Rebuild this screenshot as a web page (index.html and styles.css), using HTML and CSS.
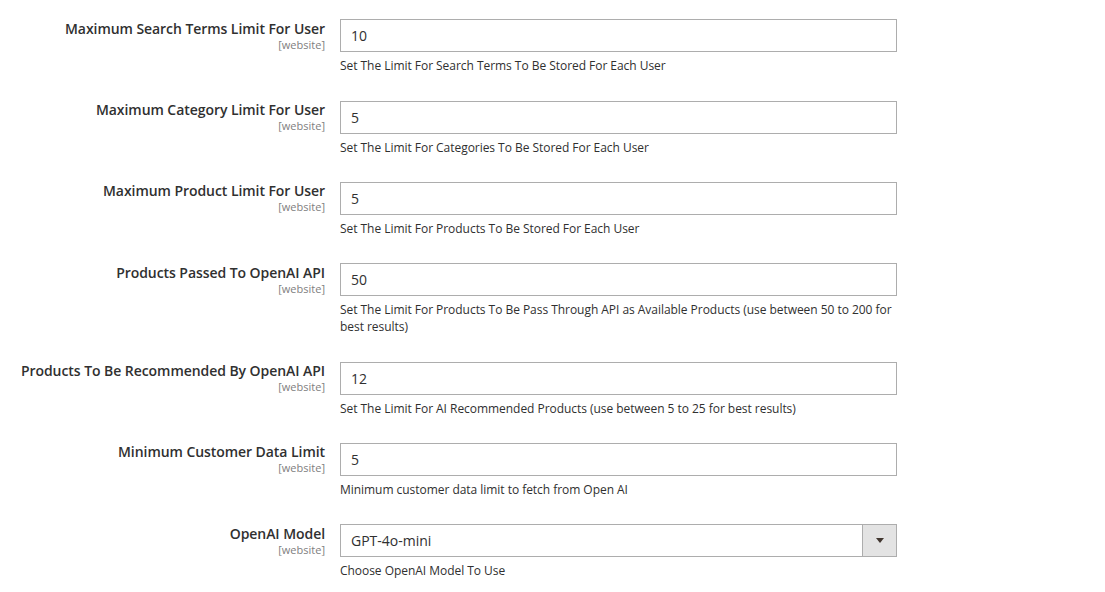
FILE: index.html
```html
<!DOCTYPE html>
<html lang="en">
<head>
<meta charset="utf-8">
<title>Config</title>
<link rel="stylesheet" href="styles.css">
</head>
<body>
<div class="form">
  <div class="row">
    <div class="label"><span class="title">Maximum Search Terms Limit For User</span><span class="scope">[website]</span></div>
    <div class="control">
      <input class="input" type="text" value="10">
      <p class="note">Set The Limit For Search Terms To Be Stored For Each User</p>
    </div>
  </div>
  <div class="row">
    <div class="label"><span class="title">Maximum Category Limit For User</span><span class="scope">[website]</span></div>
    <div class="control">
      <input class="input" type="text" value="5">
      <p class="note">Set The Limit For Categories To Be Stored For Each User</p>
    </div>
  </div>
  <div class="row">
    <div class="label"><span class="title">Maximum Product Limit For User</span><span class="scope">[website]</span></div>
    <div class="control">
      <input class="input" type="text" value="5">
      <p class="note">Set The Limit For Products To Be Stored For Each User</p>
    </div>
  </div>
  <div class="row">
    <div class="label"><span class="title">Products Passed To OpenAI API</span><span class="scope">[website]</span></div>
    <div class="control">
      <input class="input" type="text" value="50">
      <p class="note">Set The Limit For Products To Be Pass Through API as Available Products (use between 50 to 200 for best results)</p>
    </div>
  </div>
  <div class="row">
    <div class="label"><span class="title">Products To Be Recommended By OpenAI API</span><span class="scope">[website]</span></div>
    <div class="control">
      <input class="input" type="text" value="12">
      <p class="note">Set The Limit For AI Recommended Products (use between 5 to 25 for best results)</p>
    </div>
  </div>
  <div class="row">
    <div class="label"><span class="title">Minimum Customer Data Limit</span><span class="scope">[website]</span></div>
    <div class="control">
      <input class="input" type="text" value="5">
      <p class="note">Minimum customer data limit to fetch from Open AI</p>
    </div>
  </div>
  <div class="row">
    <div class="label"><span class="title">OpenAI Model</span><span class="scope">[website]</span></div>
    <div class="control">
      <div class="select">
        <span class="select-value">GPT-4o-mini</span>
        <span class="select-btn"><span class="arrow"></span></span>
      </div>
      <p class="note">Choose OpenAI Model To Use</p>
    </div>
  </div>
</div>
</body>
</html>
```

FILE: styles.css
```css
* { box-sizing: border-box; }
html, body {
  margin: 0;
  padding: 0;
  background: #ffffff;
  font-family: "Open Sans", "Noto Sans", sans-serif;
  color: #303030;
}
.form {
  padding-top: 19.2px;
}
.row {
  display: flex;
  padding-bottom: 26.33px;
}
.label {
  width: 325px;
  margin-right: 15px;
  display: flex;
  flex-direction: column;
  align-items: flex-end;
  text-align: right;
  padding-top: 0.5px;
}
.title {
  font-size: 14px;
  font-weight: 600;
  line-height: 17px;
  letter-spacing: -0.06px;
  color: #303030;
}
.scope {
  font-size: 11px;
  line-height: 13px;
  padding-top: 1px;
  color: #808080;
}
.control {
  width: 557px;
}
.input {
  display: block;
  width: 100%;
  height: 33px;
  margin: 0;
  border: 1px solid #adadad;
  border-radius: 0;
  padding: 0 10px;
  font-family: "Open Sans", "Noto Sans", sans-serif;
  font-size: 14px;
  color: #303030;
  background: #fff;
  outline: none;
}
.note {
  margin: 5px 0 0;
  font-size: 12px;
  line-height: 17px;
  letter-spacing: -0.04px;
  color: #303030;
}
.select {
  display: flex;
  height: 33px;
  border: 1px solid #adadad;
  background: #fff;
}
.select-value {
  flex: 1;
  padding: 0 10px;
  font-size: 14px;
  line-height: 31px;
  color: #303030;
}
.select-btn {
  width: 34px;
  border-left: 1px solid #adadad;
  background: #e3e3e3;
  display: flex;
  align-items: center;
  justify-content: center;
}
.arrow {
  width: 0;
  height: 0;
  border-left: 4px solid transparent;
  border-right: 4px solid transparent;
  border-top: 5px solid #41362f;
}
```
